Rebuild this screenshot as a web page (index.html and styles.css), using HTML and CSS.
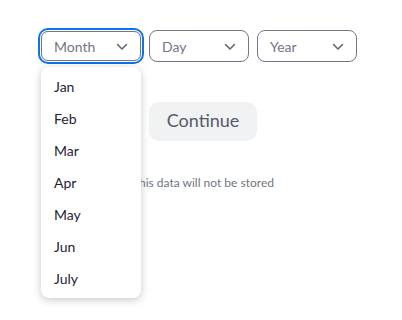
FILE: index.html
```html
<!DOCTYPE html>
<html>
<head>
<meta charset="utf-8">
<link rel="stylesheet" href="styles.css">
</head>
<body>
<div class="page">
  <div class="selects">
    <div class="select-wrap">
      <div class="select focused">
        <span class="label">Month</span>
        <svg class="chev" width="12" height="8" viewBox="0 0 12 8"><path d="M1.5 1.5 L6 6 L10.5 1.5" fill="none" stroke="#5f6270" stroke-width="1.5" stroke-linecap="round" stroke-linejoin="round"/></svg>
      </div>
      <ul class="menu">
        <li>Jan</li>
        <li>Feb</li>
        <li>Mar</li>
        <li>Apr</li>
        <li>May</li>
        <li>Jun</li>
        <li>July</li>
      </ul>
    </div>
    <div class="select">
      <span class="label">Day</span>
      <svg class="chev" width="12" height="8" viewBox="0 0 12 8"><path d="M1.5 1.5 L6 6 L10.5 1.5" fill="none" stroke="#5f6270" stroke-width="1.5" stroke-linecap="round" stroke-linejoin="round"/></svg>
    </div>
    <div class="select">
      <span class="label">Year</span>
      <svg class="chev" width="12" height="8" viewBox="0 0 12 8"><path d="M1.5 1.5 L6 6 L10.5 1.5" fill="none" stroke="#5f6270" stroke-width="1.5" stroke-linecap="round" stroke-linejoin="round"/></svg>
    </div>
  </div>
  <div class="actions">
    <button class="continue">Continue</button>
    <p class="note">This data will not be stored</p>
  </div>
</div>
</body>
</html>
```
FILE: styles.css
```css
* { box-sizing: border-box; }
body {
  margin: 0;
  background: #fff;
  font-family: Lato, "Noto Sans", sans-serif;
}
.page {
  padding: 30px 0 0 41px;
  width: 402px;
  height: 320px;
}
.selects {
  display: flex;
  align-items: center;
  gap: 8px;
}
.select-wrap {
  position: relative;
}
.select {
  width: 100px;
  height: 32px;
  border: 1px solid #747487;
  border-radius: 8px;
  display: flex;
  align-items: center;
  justify-content: space-between;
  padding: 0 12px 0 12px;
}
.select.focused {
  height: 30px;
  border-radius: 7px;
  box-shadow: 0 0 0 1px #fff, 0 0 0 3px #0e72ed;
}
.label {
  font-size: 14px;
  color: #747487;
}
.chev {
  display: block;
  margin-top: 1px;
}
.menu {
  position: absolute;
  top: 36px;
  left: 0;
  width: 100px;
  margin: 0;
  padding: 4px 0 3px;
  list-style: none;
  background: #fff;
  border-radius: 8px;
  box-shadow: 0 2px 8px rgba(0, 0, 0, 0.22);
  z-index: 2;
}
.menu li {
  height: 32px;
  line-height: 32px;
  padding-left: 13px;
  font-size: 14px;
  color: #232333;
}
.actions {
  width: 316px;
  padding-left: 8px;
  display: flex;
  flex-direction: column;
  align-items: center;
  margin-top: 40px;
}
.continue {
  width: 108px;
  height: 39px;
  border: none;
  border-radius: 10px;
  background: #f1f2f4;
  color: #555a66;
  font-family: Lato, "Noto Sans", sans-serif;
  font-size: 18px;
  padding: 0 0 3px;
}
.note {
  margin: 35px 0 0;
  font-size: 12px;
  line-height: 14px;
  color: #6e7680;
}
```
